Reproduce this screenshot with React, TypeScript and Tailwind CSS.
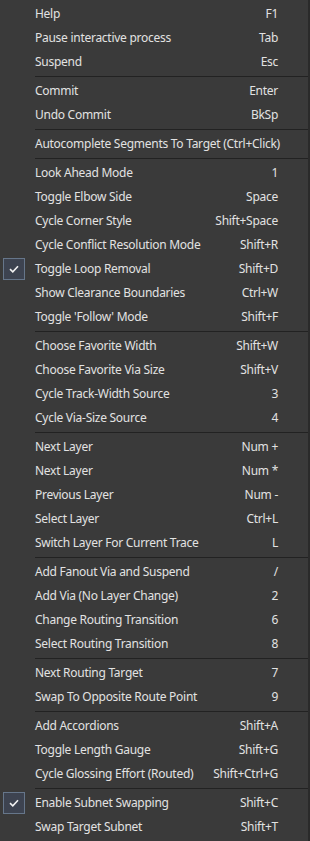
import React from 'react';

type Item = { label: string; shortcut?: string; checked?: boolean };

// groups are separated by a thin divider line
const groups: Item[][] = [
  [
    { label: 'Help', shortcut: 'F1' },
    { label: 'Pause interactive process', shortcut: 'Tab' },
    { label: 'Suspend', shortcut: 'Esc' },
  ],
  [
    { label: 'Commit', shortcut: 'Enter' },
    { label: 'Undo Commit', shortcut: 'BkSp' },
  ],
  [{ label: 'Autocomplete Segments To Target (Ctrl+Click)' }],
  [
    { label: 'Look Ahead Mode', shortcut: '1' },
    { label: 'Toggle Elbow Side', shortcut: 'Space' },
    { label: 'Cycle Corner Style', shortcut: 'Shift+Space' },
    { label: 'Cycle Conflict Resolution Mode', shortcut: 'Shift+R' },
    { label: 'Toggle Loop Removal', shortcut: 'Shift+D', checked: true },
    { label: 'Show Clearance Boundaries', shortcut: 'Ctrl+W' },
    { label: "Toggle 'Follow' Mode", shortcut: 'Shift+F' },
  ],
  [
    { label: 'Choose Favorite Width', shortcut: 'Shift+W' },
    { label: 'Choose Favorite Via Size', shortcut: 'Shift+V' },
    { label: 'Cycle Track-Width Source', shortcut: '3' },
    { label: 'Cycle Via-Size Source', shortcut: '4' },
  ],
  [
    { label: 'Next Layer', shortcut: 'Num +' },
    { label: 'Next Layer', shortcut: 'Num *' },
    { label: 'Previous Layer', shortcut: 'Num -' },
    { label: 'Select Layer', shortcut: 'Ctrl+L' },
    { label: 'Switch Layer For Current Trace', shortcut: 'L' },
  ],
  [
    { label: 'Add Fanout Via and Suspend', shortcut: '/' },
    { label: 'Add Via (No Layer Change)', shortcut: '2' },
    { label: 'Change Routing Transition', shortcut: '6' },
    { label: 'Select Routing Transition', shortcut: '8' },
  ],
  [
    { label: 'Next Routing Target', shortcut: '7' },
    { label: 'Swap To Opposite Route Point', shortcut: '9' },
  ],
  [
    { label: 'Add Accordions', shortcut: 'Shift+A' },
    { label: 'Toggle Length Gauge', shortcut: 'Shift+G' },
    { label: 'Cycle Glossing Effort (Routed)', shortcut: 'Shift+Ctrl+G' },
  ],
  [
    { label: 'Enable Subnet Swapping', shortcut: 'Shift+C', checked: true },
    { label: 'Swap Target Subnet', shortcut: 'Shift+T' },
  ],
];

const MenuRow = ({ item }: { item: Item }) => (
  <div className="flex h-6 items-center">
    <div className="flex w-[35px] shrink-0 items-center pl-[3px]">
      {item.checked && (
        <span className="flex h-[22px] w-[22px] items-center justify-center border border-[#66768a] bg-[#3d4350]">
          <svg width="10" height="8" viewBox="0 0 10 8" fill="none">
            <path d="M1 4.2 L3.8 6.8 L9 1.2" stroke="#f2f2f2" strokeWidth="1.6" />
          </svg>
        </span>
      )}
    </div>
    <span className="flex-1 whitespace-nowrap">{item.label}</span>
    {item.shortcut && <span className="whitespace-nowrap pr-[30px] pl-4">{item.shortcut}</span>}
  </div>
);

export default function App() {
  return (
    <div
      className="h-[841px] w-[310px] overflow-hidden border-r-2 border-[#2a2a2a] bg-[#3a3a3a] py-[2px] text-[12px] tracking-[-0.27px] text-[#e2e2e2]"
      style={{ fontFamily: '"Noto Sans", "Open Sans", sans-serif' }}
    >
      {groups.map((group, gi) => (
        <div key={gi}>
          {gi > 0 && (
            <div className="py-[2px] pl-[35px]">
              <div className="h-px bg-[#222222]" />
            </div>
          )}
          {group.map((item, i) => (
            <MenuRow key={i} item={item} />
          ))}
        </div>
      ))}
    </div>
  );
}
